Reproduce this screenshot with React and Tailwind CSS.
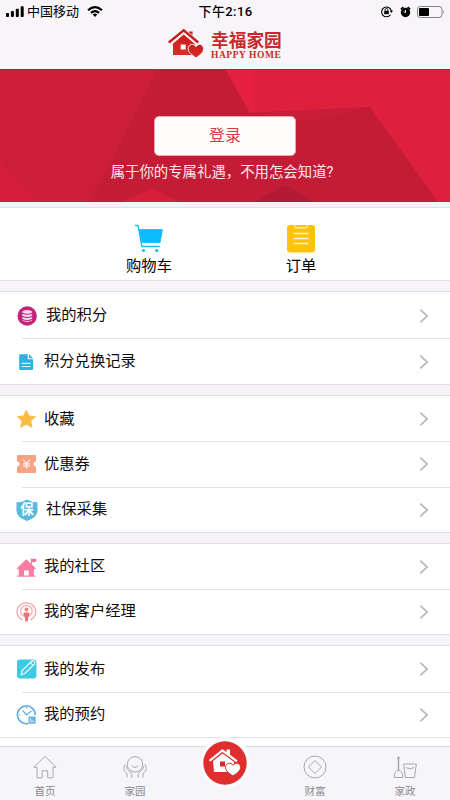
import React from 'react';

const Chevron = () => (
  <svg className="w-[10px] h-4" viewBox="0 0 10 16" fill="none" stroke="#b9b9bd" strokeWidth="1.7">
    <path d="M1.3 1.7 8.2 8l-6.9 6.3" />
  </svg>
);

const Logo = () => (
  <svg className="w-9 h-8" viewBox="0 0 36 32">
    <defs>
      <linearGradient id="logoRed" x1="0" y1="0" x2="0" y2="1">
        <stop offset="0" stopColor="#c8201f" />
        <stop offset="1" stopColor="#e12a25" />
      </linearGradient>
    </defs>
    <path d="M4 16.5 15.7 6.5 27 16v11H5V16.5z" fill="url(#logoRed)" />
    <path d="M20.800 3.500h3.700v6h-3.700z" fill="#c8201f" />
    <path d="M.8 15.300 15.700 2.700l14 12" fill="none" stroke="#f7f5f8" strokeWidth="4.500" />
    <path d="M.8 14.500 15.700 2.300l14.500 12.200" fill="none" stroke="#c5211f" strokeWidth="2.500" />
    <path d="M12.700 16.500h5v5h-5z" fill="#fff" />
    <path d="M28 30c-4-3.200-7.800-5.300-7.800-9.300 0-4.700 5.800-5.800 7.800-2 2-3.800 7.600-2.700 7.600 2C35.600 24.700 32 26.800 28 30z" fill="url(#logoRed)" stroke="#f7f5f8" strokeWidth="1" />
  </svg>
);

const StatusBar = () => (
  <div className="grid grid-cols-3 items-center h-[23px] pl-[6px] pr-[5px] text-black">
    <div className="flex items-center">
      <svg className="w-[18px] h-[11px]" viewBox="0 0 18 11">
        <rect x="0" y="7" width="3" height="4" rx="0.8" />
        <rect x="4.900" y="5" width="3" height="6" rx="0.8" />
        <rect x="9.800" y="2.700" width="3" height="8.300" rx="0.8" />
        <rect x="14.700" y="0.300" width="3" height="10.700" rx="0.8" />
      </svg>
      <span className="ml-[3px] text-[13px] leading-none">中国移动</span>
      <svg className="w-4 h-[11px] ml-[8px]" viewBox="0 0 16 11" fill="none" stroke="#000" strokeWidth="2.100">
        <path d="M1 4.300Q8-1.900 15 4.300" />
        <path d="M3.900 6.900Q8 3.200 12.100 6.900" />
        <path d="M5.700 8.400Q8 6.700 10.300 8.400L8 11z" fill="#000" stroke="none" />
      </svg>
    </div>
    <span className="text-center text-[13px] leading-none tracking-[0.4px] font-medium">下午2:16</span>
    <div className="flex items-center justify-end">
      <svg className="w-[13px] h-[13px] mr-[7px]" viewBox="0 0 13 13" fill="none" stroke="#000">
        <path d="M10.500 9.700A4.900 4.900 0 1 1 11.300 6" strokeWidth="1.100" />
        <path d="m9.600 5.700 1.800 2.300 1.600-2.400z" fill="#000" stroke="none" />
        <path d="M4.200 5.900h4.600v3.300H4.200z" fill="#000" stroke="none" />
        <path d="M5.200 6V4.800a1.300 1.300 0 0 1 2.600 0V6" strokeWidth="0.900" />
      </svg>
      <svg className="w-[11px] h-3 mr-[6px]" viewBox="0 0 11 12">
        <circle cx="5.500" cy="6.500" r="4.700" />
        <path d="M.9 3.300 3.300 1M10.100 3.300 7.700 1" stroke="#000" strokeWidth="1.700" />
        <path d="M5.500 4v2.800L3.600 5.500" stroke="#fff" strokeWidth="0.900" fill="none" />
      </svg>
      <svg className="w-7 h-3" viewBox="0 0 28 12">
        <rect x="0.500" y="0.500" width="24.500" height="11" rx="2.700" fill="none" stroke="#777" strokeWidth="0.900" />
        <rect x="2" y="2" width="10" height="8" rx="1" />
        <path d="M26 4.200q1.700 1.800 0 3.600z" fill="#777" />
      </svg>
    </div>
  </div>
);

const Banner = () => (
  <div className="relative h-[133px] bg-[#c41c37] overflow-hidden">
    <svg className="absolute inset-0 w-full h-full" viewBox="0 0 450 133">
      <path d="M0 0h158L90 133H0z" fill="#cc1e3a" />
      <path d="M0 94 37 133H0z" fill="#d61e3c" />
      <path d="M225 0h225v133h-12L370 38l-120 6z" fill="#df203d" />
      <path d="M225 0h29v43l-4 1z" fill="#e5203f" />
      <path d="M250 44 370 38l-62 14z" fill="#c91d39" />
      <path d="m120 133 32-13 28 13z" fill="#d91e3c" />
      <path d="m255 133 30-17 30 17z" fill="#b31a35" />
      <path d="M0 .5h450" stroke="#c4142f" />
    </svg>
    <div className="relative flex flex-col items-center pt-[47px]">
      <button className="w-[142px] h-[40px] rounded-[5px] bg-[#fffdfc] border border-[#e9a6ab] text-[#d04046] text-[16px] leading-none">
        登录
      </button>
      <p className="mt-[7px] mr-[6px] text-[14.4px] leading-[20px] text-[#fbe8ea] whitespace-nowrap">
        属于你的专属礼遇，不用怎会知道?
      </p>
    </div>
  </div>
);

const CartIcon = () => (
  <svg className="w-[30px] h-[29px]" viewBox="0 0 30 29" fill="none" stroke="#17b9f5">
    <path d="M1 1.500h3l3.800 21h18" strokeWidth="1.300" />
    <path d="M5.200 5.500h23.300l-2.400 13H8z" fill="#0bbcfa" strokeWidth="0.800" />
    <circle cx="9.500" cy="26.500" r="1.600" fill="#17b9f5" stroke="none" />
    <circle cx="22.800" cy="26.500" r="1.600" fill="#17b9f5" stroke="none" />
  </svg>
);

const OrderIcon = () => (
  <svg className="w-[30px] h-[29px]" viewBox="0 0 30 29">
    <rect x="1" y="1" width="28" height="27.500" rx="3" fill="#fcc20c" />
    <path d="M8.700 1v1.300q0 1.600 1.600 1.600h9.400q1.600 0 1.600-1.600V1" fill="#fcc20c" stroke="#fff3c8" strokeWidth="1.100" />
    <path d="M7.500 9.500h15M7.500 14.500h15M7.500 19.500h15" stroke="#fff5d0" strokeWidth="1.500" />
  </svg>
);

const CoinsIcon = () => (
  <svg className="w-[22px] h-[22px]" viewBox="0 0 22 22">
    <circle cx="11.200" cy="11" r="9.700" fill="#c4237a" />
    <path d="M6.300 6.500q4.900-2.800 9.800 0v9q-4.900 2.800-9.800 0z" fill="#f9dcec" />
    <path d="M6 8q5.200 2.500 10.400 0M6 11.200q5.200 2.500 10.400 0M6 14.300q5.200 2.500 10.400 0" fill="none" stroke="#c4237a" strokeWidth="1.100" />
  </svg>
);

const FileIcon = () => (
  <svg className="w-[22px] h-[22px]" viewBox="0 0 22 22">
    <path d="M4.500 3.300h7.300v5h5.300v9.900q0 .8-.8.8H4.200q-1 0-1-.8V4.300q0-1 1.300-1z" fill="#26b5df" />
    <path d="m13 3.300 4.100 4h-4.100z" fill="#26b5df" />
    <path d="M5.700 12.300h8.800M5.700 15.500h8.800" stroke="#dff6fd" strokeWidth="1.200" />
  </svg>
);

const StarIcon = () => (
  <svg className="w-[22px] h-[22px]" viewBox="0 0 22 22">
    <path d="m10.300 2 2.700 5.900 6.600.7-4.900 4.400 1.400 6.400-5.800-3.200-5.700 3.200L6 13 1.100 8.600l6.500-.7z" fill="#fabb43" stroke="#fabb43" strokeWidth="0.800" strokeLinejoin="round" />
  </svg>
);

const CouponIcon = () => (
  <svg className="w-[22px] h-[22px]" viewBox="0 0 22 22">
    <path d="M2 2h17q1 0 1 1v5.500a2.500 2.500 0 0 0 0 5V19q0 1-1 1H2q-1 0-1-1v-5.500a2.500 2.500 0 0 0 0-5V3q0-1 1-1z" fill="#f9a183" />
    <path d="m7.200 6.600 3.300 4 3.300-4M10.500 10.600V16M7 10.900h7M7 13.200h7" fill="none" stroke="#fff0e9" strokeWidth="1.200" />
  </svg>
);

const ShieldIcon = () => (
  <span className="relative flex w-[22px] h-[22px] justify-center">
    <svg className="absolute inset-0 w-[22px] h-[22px]" viewBox="0 0 22 22">
      <path d="M11 .4q4.500 2.800 10.500 2.900v8.400q0 6.500-10.500 10.200Q.5 18.200.5 11.700V3.300Q6.500 3.200 11 .4z" fill="#57bbdf" />
    </svg>
    <span className="relative text-[13.500px] leading-[20px] font-bold text-white">保</span>
  </span>
);

const HouseIcon = () => (
  <svg className="w-[22px] h-[22px]" viewBox="0 0 22 22">
    <path d="M10.300 3.200 20 12.500l-1.200 1-.9-.7v6.700h1.500v1.200H1.300v-1.200h1.500v-6.700l-.9.700L.7 12.500z" fill="#fa7ca3" />
    <path d="M8 14.500h4.800v5H8z" fill="#fff" />
    <path d="M14.900 8V2.600l3 .5 2.300-.5v3.200l-2.600.4-1.700-.3V9z" fill="#f5749c" />
  </svg>
);

const ManagerIcon = () => (
  <svg className="w-[22px] h-[22px]" viewBox="0 0 22 22" fill="none" stroke="#f0a0a2">
    <path d="M6.500 18.900A9.400 8.900 0 1 1 14.300 18.900" strokeWidth="1.200" />
    <path d="M7 14.800A5.800 5.700 0 1 1 13.800 14.800" strokeWidth="1.200" />
    <circle cx="10.500" cy="8.500" r="2" fill="#ea8484" stroke="none" />
    <path d="M7.600 11.500h5.800v4l-1.200.6-.4 4.400H9.200l-.4-4.400-1.200-.6z" fill="#ec7476" stroke="none" />
  </svg>
);

const EditIcon = () => (
  <svg className="w-[22px] h-[22px]" viewBox="0 0 22 22">
    <rect x="1" y="1.500" width="19.400" height="19" rx="3.200" fill="#3bcbe2" />
    <path d="M5.200 16.800 6 12.700l9.600-9.500q1.400-1 2.600.2 1.200 1.400.2 2.700L9 15.500z" fill="none" stroke="#e7fbff" strokeWidth="1.300" />
    <path d="m14.300 4.600 2.800 2.800" stroke="#e7fbff" strokeWidth="1.100" />
  </svg>
);

const ClockIcon = () => (
  <svg className="w-[22px] h-[22px]" viewBox="0 0 22 22" fill="none" stroke="#5aa9df">
    <path d="M12.500 19.400A8.900 8.900 0 1 1 19.200 11" strokeWidth="1.500" />
    <path d="m6.500 6.400 4 4.600 5-4M3 11h1.300M10.500 3v1.500" strokeWidth="1.200" />
    <rect x="12.500" y="12.500" width="7.200" height="7.200" rx="0.800" fill="#6bb5e8" stroke="none" />
    <path d="M14.600 14v3.300h3.500" stroke="#e6f4fd" strokeWidth="0.900" />
  </svg>
);

const groups = [
  {
    className: 'h-[94px]',
    rows: [
      { label: '我的积分', icon: CoinsIcon, wide: true },
      { label: '积分兑换记录', icon: FileIcon },
    ],
  },
  {
    className: 'h-[138px]',
    rows: [
      { label: '收藏', icon: StarIcon },
      { label: '优惠券', icon: CouponIcon },
      { label: '社保采集', icon: ShieldIcon, wide: true },
    ],
  },
  {
    className: 'h-[92px]',
    rows: [
      { label: '我的社区', icon: HouseIcon },
      { label: '我的客户经理', icon: ManagerIcon },
    ],
  },
  {
    className: 'h-[93px]',
    rows: [
      { label: '我的发布', icon: EditIcon },
      { label: '我的预约', icon: ClockIcon },
    ],
  },
];

const Row = ({ label, icon: Icon, wide, first }) => (
  <div className="flex flex-col flex-1">
    <div className={`ml-[22px] h-px ${first ? 'bg-transparent' : 'bg-[#e3e1e6]'}`} />
    <div className="flex flex-1 items-center pl-4 pr-[21px]">
      <Icon />
      <span className={`flex-1 text-[15.3px] leading-none text-[#0c0c0c] ${wide ? 'ml-[8px]' : 'ml-[6px]'}`}>
        {label}
      </span>
      <Chevron />
    </div>
  </div>
);

const tabStroke = { fill: 'none', stroke: '#a9a7ad', strokeWidth: 1 };

const Tab = ({ label, children }) => (
  <div className="flex flex-col items-center w-[90px] pt-[8px]">
    <svg className="w-6 h-6" viewBox="0 0 24 24" {...tabStroke}>
      {children}
    </svg>
    <span className="mt-[6px] text-[10.5px] leading-[14px] text-[#8b898f]">{label}</span>
  </div>
);

const TabBar = () => (
  <div className="relative flex h-[54px] bg-[#f6f5f9] border-t border-[#dddbe1]">
    <Tab label="首页">
      <path d="M12 1.200 1 12.300h3v10.500h5.200v-7h5.500v7H20V12.300h3z" />
    </Tab>
    <Tab label="家园">
      <circle cx="12" cy="9.300" r="7.700" />
      <path d="M8.700 10.500q3.300 4 6.600 0" />
      <path d="M2.200 9.500C-.2 13.500.5 16 4 18.500v4M4 11c-1.300 3 1 4 3.500 6 1.500 1.500 1.700 3 1 5.800M21.800 9.500c2.400 4 1.700 6.500-1.800 9v4M20 11c1.300 3-1 4-3.500 6-1.500 1.500-1.700 3-1 5.800" />
    </Tab>
    <div className="w-[90px] flex justify-center">
      <div className="relative -mt-[10px] flex items-center justify-center w-[51px] h-[51px] rounded-full bg-[#fbfafc]">
        <svg className="w-11 h-11" viewBox="0 0 44 44">
          <circle cx="22" cy="22" r="21.700" fill="#e02e2e" />
          <path d="m10 20 9.500-7.500L31 20.500V31H11z" fill="#fff" />
          <path d="m6 19.500 13.500-10.400L34 20" fill="none" stroke="#e02e2e" strokeWidth="5" />
          <path d="m6.500 19.800 13-10.300L34 20.300" fill="none" stroke="#fff" strokeWidth="2.200" />
          <path d="M23.500 8.500H27v5.800l-3.500-2.500z" fill="#fff" />
          <path d="M17 20.500h5v5h-5z" fill="#d6292b" />
          <path d="M30 35c-4.300-3-7.500-5-7.500-8.700 0-4.500 5.600-5.500 7.500-2 1.900-3.500 7.500-2.500 7.500 2C37.500 30 34.300 32 30 35z" fill="#fff" stroke="#e02e2e" />
        </svg>
      </div>
    </div>
    <Tab label="财富">
      <circle cx="12" cy="12" r="11" />
      <path d="m12 5.500 6.500 6.500-6.500 6.500L5.500 12z" />
    </Tab>
    <Tab label="家政">
      <path d="M5.500 2v13.500" strokeWidth="1.500" />
      <circle cx="5.500" cy="2.700" r="0.900" />
      <path d="M1.200 22.500q0-7 4.300-7t4.300 7zM10.700 9h12.600l-1.800 13.500h-9.200zM13 12.500q4 2.700 8 0" />
    </Tab>
  </div>
);

const App = () => {
  return (
    <div className="flex flex-col w-[450px] h-[800px] overflow-hidden bg-[#f6f4f8] font-['Roboto','Noto_Sans_CJK_SC',sans-serif]">
      <header className="h-[69px] shrink-0 bg-[#f7f5f8]">
        <StatusBar />
        <div className="flex items-center pl-[168px] pt-[5px]">
          <Logo />
          <div className="flex flex-col ml-[7px] pt-[3px] text-[#c72a2a]">
            <span className="text-[17.7px] leading-[18px] font-bold whitespace-nowrap">幸福家园</span>
            <span className="mt-px text-[9.5px] leading-[9px] font-bold tracking-[0.55px] whitespace-nowrap font-['Liberation_Serif',serif]">
              HAPPY HOME
            </span>
          </div>
        </div>
      </header>
      <Banner />
      <section className="flex shrink-0 mt-[5px] h-[74px] px-[73px] bg-white border-y border-[#e3e1e6]">
        <div className="flex flex-col flex-1 items-center pt-[16px]">
          <CartIcon />
          <span className="mt-[3px] text-[15.3px] leading-5 text-black">购物车</span>
        </div>
        <div className="flex flex-col flex-1 items-center pt-[16px]">
          <OrderIcon />
          <span className="mt-[3px] text-[15.3px] leading-5 text-black">订单</span>
        </div>
      </section>
      <main className="flex flex-col gap-[10px] pt-[10px]">
        {groups.map((group, i) => (
          <section
            key={i}
            className={`flex flex-col shrink-0 bg-white border-y border-[#e1dfe4] ${group.className}`}
          >
            {group.rows.map((row, j) => (
              <Row key={row.label} {...row} first={j === 0} />
            ))}
          </section>
        ))}
      </main>
      <div className="flex-1 bg-white" />
      <TabBar />
    </div>
  );
};

export default App;
